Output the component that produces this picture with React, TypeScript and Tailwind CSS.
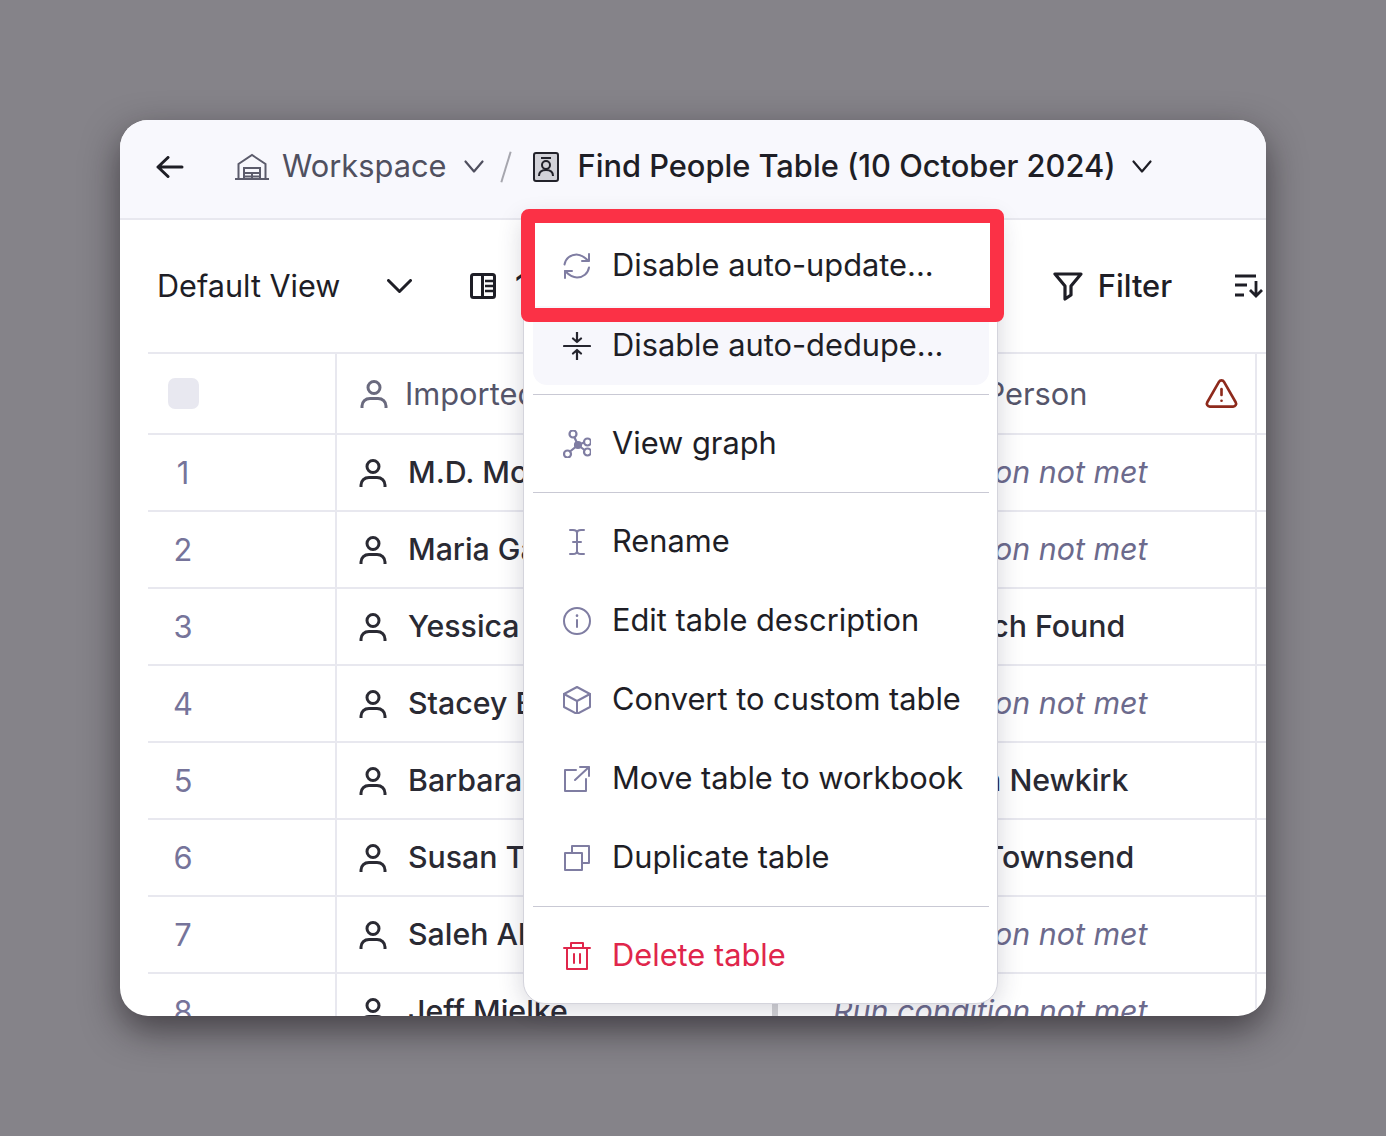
import { TriangleAlert } from "lucide-react";
import type { ReactNode } from "react";

const Svg = ({ size = 28, className = "", sw = 2, children }: { size?: number; className?: string; sw?: number; children: ReactNode }) => (
  <svg width={size} height={size} viewBox={`0 0 ${size} ${size}`} fill="none" stroke="currentColor" strokeWidth={sw} strokeLinecap="round" strokeLinejoin="round" className={`shrink-0 ${className}`}>
    {children}
  </svg>
);

const PersonIcon = ({ className = "" }: { className?: string }) => (
  <svg width="30" height="30" viewBox="0 0 30 30" fill="none" stroke="currentColor" strokeWidth="3" className={`shrink-0 ${className}`}>
    <circle cx="15" cy="8.500" r="6" />
    <path d="M3 29v-2c0-4.500 3.500-7.500 8-7.500h8c4.500 0 8 3 8 7.500v2" />
  </svg>
);

const Chevron = ({ w, h, sw, className = "" }: { w: number; h: number; sw: number; className?: string }) => (
  <svg width={w} height={h} viewBox={`0 0 ${w} ${h}`} fill="none" stroke="currentColor" strokeWidth={sw} strokeLinecap="round" strokeLinejoin="round" className={`shrink-0 ${className}`}>
    <path d={`M1.500 1.500L${w / 2} ${h - 1.500}L${w - 1.500} 1.500`} />
  </svg>
);

const menuGroups: { label: string; icon: ReactNode; highlight?: boolean; danger?: boolean; dark?: boolean; lift?: string }[][] = [
  [
    {
      label: "Disable auto-update...",
      lift: "pb-[2px]",
      icon: (
        <Svg>
          <path d="M1.500 12.500C2.500 6.500 7.500 2.500 13.500 2.500c5 0 8 2.500 12 6.500" />
          <path d="M26 2v7h-7" />
          <path d="M26 15.500c-1 6-6 10-12 10-5 0-8-2.500-12-6.500" />
          <path d="M2 26v-7h7" />
        </Svg>
      ),
    },
    {
      label: "Disable auto-dedupe...",
      highlight: true,
      dark: true,
      icon: (
        <Svg sw={2.200}>
          <path d="M1 14h26" />
          <path d="M14 0v10M10 6.500l4 3.500 4-3.500" />
          <path d="M14 28V18M10 21.500l4-3.500 4 3.500" />
        </Svg>
      ),
    },
  ],
  [
    {
      label: "View graph",
      icon: (
        <Svg sw={2.200}>
          <circle cx="10" cy="4" r="3.500" />
          <circle cx="24.500" cy="12" r="3.500" />
          <circle cx="24.500" cy="22" r="3.500" />
          <circle cx="4.500" cy="24" r="3.500" />
          <circle cx="15" cy="15" r="3" fill="currentColor" />
          <path d="M11.500 7.500L15 15M21 12.500L15 15M21.500 20L15 15M7 21.500L15 15" />
        </Svg>
      ),
    },
  ],
  [
    {
      label: "Rename",
      icon: (
        <Svg>
          <path d="M7 2h3c2.500 0 4 1 4 3v18c0 2-1.500 3-4 3H7" />
          <path d="M21 2h-3c-2.500 0-4 1-4 3v18c0 2 1.500 3 4 3h3" />
          <path d="M10 14h8" />
        </Svg>
      ),
    },
    {
      label: "Edit table description",
      icon: (
        <Svg>
          <circle cx="14" cy="14" r="13" />
          <path d="M14 13v7" />
          <path d="M14 8.500v.2" strokeWidth="2.600" />
        </Svg>
      ),
    },
    {
      label: "Convert to custom table",
      icon: (
        <Svg>
          <path d="M14 1l13 7v13l-13 7-13-7V8z" />
          <path d="M1 8l13 7 13-7M14 15v13" />
        </Svg>
      ),
    },
    {
      label: "Move table to workbook",
      icon: (
        <Svg>
          <path d="M13 5H2v21h21V14" />
          <path d="M12 15L26 2M17 2h9v9" />
        </Svg>
      ),
    },
    {
      label: "Duplicate table",
      icon: (
        <Svg>
          <path d="M2 9h17v17H2z" />
          <path d="M9 9V2h17v17h-7" />
        </Svg>
      ),
    },
  ],
  [
    {
      label: "Delete table",
      danger: true,
      icon: (
        <Svg>
          <path d="M1 6h26M4 6v21h20V6" />
          <path d="M8 6V1h12v5" />
          <path d="M11 12v9M17 12v9" />
        </Svg>
      ),
    },
  ],
];

const rows: { name: string; right: string; muted?: boolean; icon?: boolean; pad: string }[] = [
  { name: "M.D. McCarthy", right: "Run condition not met", muted: true, pad: "pl-[55px]" },
  { name: "Maria Garcia", right: "Run condition not met", muted: true, pad: "pl-[55px]" },
  { name: "Yessica Torres", right: "No Match Found", pad: "pl-[109px]" },
  { name: "Stacey Bell", right: "Run condition not met", muted: true, pad: "pl-[55px]" },
  { name: "Barbara Newkirk", right: "Barbara Newkirk", icon: true, pad: "pl-[61px]" },
  { name: "Susan Townsend", right: "Susan Townsend", icon: true, pad: "pl-[61px]" },
  { name: "Saleh Alnasser", right: "Run condition not met", muted: true, pad: "pl-[55px]" },
  { name: "Jeff Mielke", right: "Run condition not met", muted: true, pad: "pl-[55px]" },
];

export default function App() {
  return (
    <div className="h-[1136px] overflow-hidden bg-[#858389] pl-[120px] pt-[120px] font-[Inter,sans-serif] text-[30.8px] text-[#1e1e26]">
      <div className="relative h-[896px] w-[1146px] rounded-[28px] bg-white shadow-[0_14px_36px_rgba(20,15,20,0.58)]">
        <div className="h-full overflow-hidden rounded-[28px]">
          {/* top bar */}
          <div className="flex h-[100px] items-center border-b-2 border-[#e8e8ef] bg-[#f8f8fd] pb-[5px] pl-[36px]">
            <svg width="28" height="22" viewBox="0 0 28 22" fill="none" stroke="currentColor" strokeWidth="3" strokeLinecap="round" strokeLinejoin="round" className="shrink-0">
              <path d="M2 11h24M12 1.500L2 11l10 9.500" />
            </svg>
            <svg width="34" height="28" viewBox="0 0 34 28" fill="none" stroke="#5c5c6c" strokeWidth="2" className="ml-[51px] shrink-0">
              <path d="M0 26h34M3.500 26V11L17 2l13.500 9v15" />
              <path d="M9 26V15h16v11M9 20h16M9 23.500h16M17 20v6" />
            </svg>
            <span className="ml-[13px] leading-none text-[#50505f]">Workspace</span>
            <Chevron w={20} h={13} sw={2.200} className="ml-[18px] text-[#50505f]" />
            <span className="ml-[21px] h-[32px] w-[2px] rotate-[17deg] bg-[#a6a6ae]" />
            <svg width="26" height="30" viewBox="0 0 26 30" fill="none" stroke="#22222a" strokeWidth="2" className="ml-[26px] shrink-0">
              <rect x="1" y="1" width="24" height="28" rx="2" fill="#d2d2d8" />
              <path d="M8 6h10" />
              <circle cx="13" cy="13" r="4" />
              <path d="M6 24c0-4 3-6 7-6s7 2 7 6" />
            </svg>
            <span className="ml-[18px] whitespace-nowrap font-medium leading-none">Find People Table (10 October 2024)</span>
            <Chevron w={20} h={13} sw={2.200} className="ml-[16px]" />
          </div>

          {/* toolbar */}
          <div className="flex h-[132px] items-center pl-[37px]">
            <span className="w-[183px] whitespace-nowrap text-[30.6px] leading-none">Default View</span>
            <Chevron w={25} h={14} sw={3} className="ml-[47px]" />
            <svg width="26" height="26" viewBox="0 0 26 26" fill="none" stroke="currentColor" strokeWidth="3" className="ml-[58px] shrink-0">
              <rect x="1.500" y="1.500" width="23" height="23" rx="2" />
              <path d="M12.500 2v22" />
              <path d="M15 8h8M15 13h8M15 18h8" strokeWidth="2.600" />
            </svg>
            <span className="ml-[19px] font-medium leading-none">1</span>
            <svg width="30" height="30" viewBox="0 0 30 30" fill="none" stroke="currentColor" strokeWidth="3.200" strokeLinejoin="round" className="ml-[525px] shrink-0">
              <path d="M2 3h26L18 15v9l-6 4V15z" />
            </svg>
            <span className="ml-[15px] font-medium leading-none">Filter</span>
            <svg width="28" height="24" viewBox="0 0 28 24" fill="none" stroke="currentColor" strokeWidth="2.800" className="ml-[63px] shrink-0">
              <path d="M0 2h21M0 11h12M0 21h9M21 7v15M15 16l6 6 6-6" />
            </svg>
          </div>

          {/* table */}
          <div className="ml-[28px] border-t-2 border-[#e8e8ef]">
            <div className="flex h-[81px] border-b-2 border-[#e8e8ef]">
              <div className="flex w-[189px] shrink-0 items-center border-r-2 border-[#e8e8ef] pl-[20px]">
                <span className="block h-[31px] w-[31px] rounded-[7px] bg-[#e8e8f0]" />
              </div>
              <div className="flex w-[441px] shrink-0 items-center gap-[16px] pl-[22px] text-[#55556a]">
                <PersonIcon className="text-[#6a6a7e]" />
                <span className="whitespace-nowrap pt-[2px]">Imported Person</span>
              </div>
              <div className="flex w-[479px] shrink-0 items-center border-r-2 border-[#e8e8ef] pr-[16px] text-[#55556a]">
                <span className="ml-[70px] whitespace-nowrap pt-[2px]">Enriched Person</span>
                <TriangleAlert size={35} strokeWidth={1.800} className="ml-auto shrink-0 text-[#8e2a1c]" />
              </div>
            </div>
            {rows.map((r, i) => (
              <div key={r.name} className="flex h-[77px] border-b-2 border-[#e8e8ef]">
                <div className="flex w-[189px] shrink-0 items-center border-r-2 border-[#e8e8ef] text-[#76749a]">
                  <span className="w-[70px] pt-[2px] text-center">{i + 1}</span>
                </div>
                <div className="flex w-[441px] shrink-0 items-center gap-[20px] border-r-[6px] border-[#d3d3d6] pl-[21px] text-[30.3px] font-[450] text-[#2a2a33]">
                  <PersonIcon />
                  <span className="whitespace-nowrap">{r.name}</span>
                </div>
                <div className={`flex w-[479px] shrink-0 items-center gap-[18px] border-r-2 border-[#e8e8ef] ${r.pad}`}>
                  {r.icon && <PersonIcon />}
                  <span className={`whitespace-nowrap ${r.muted ? "pt-[1px] text-[30.4px] italic text-[#6c6a8c]" : "text-[30.3px] font-[450] text-[#2a2a33]"}`}>{r.right}</span>
                </div>
              </div>
            ))}
          </div>
        </div>

        {/* dropdown menu */}
        <div className="absolute left-[403px] top-[97px] h-[787px] w-[475px] rounded-b-[22px] border border-[#d4d4dc] bg-white pl-[9px] pr-[8px] pt-[9px] shadow-[0_4px_26px_rgba(40,40,70,0.2)]">
          {menuGroups.map((group, g) => (
            <div key={g}>
              {g > 0 && <div className="my-[9px] h-px bg-[#c9c9d4]" />}
              {group.map((item) => (
                <div key={item.label} className={`flex h-[79px] items-center gap-[21px] pl-[30px] ${item.lift ?? ""} ${item.highlight ? "rounded-b-[14px] bg-[#f7f7fc]" : ""} ${item.danger ? "text-[#e0264b]" : "text-[#1e1e26]"}`}>
                  <span className={item.danger ? "" : item.dark ? "text-[#26262f]" : "text-[#7f7da2]"}>{item.icon}</span>
                  <span className="whitespace-nowrap leading-none">{item.label}</span>
                </div>
              ))}
            </div>
          ))}
        </div>

        {/* red highlight */}
        <div className="absolute left-[401px] top-[89px] h-[113px] w-[483px] rounded-lg border-[14px] border-[#fb3146]" />
      </div>
    </div>
  );
}
